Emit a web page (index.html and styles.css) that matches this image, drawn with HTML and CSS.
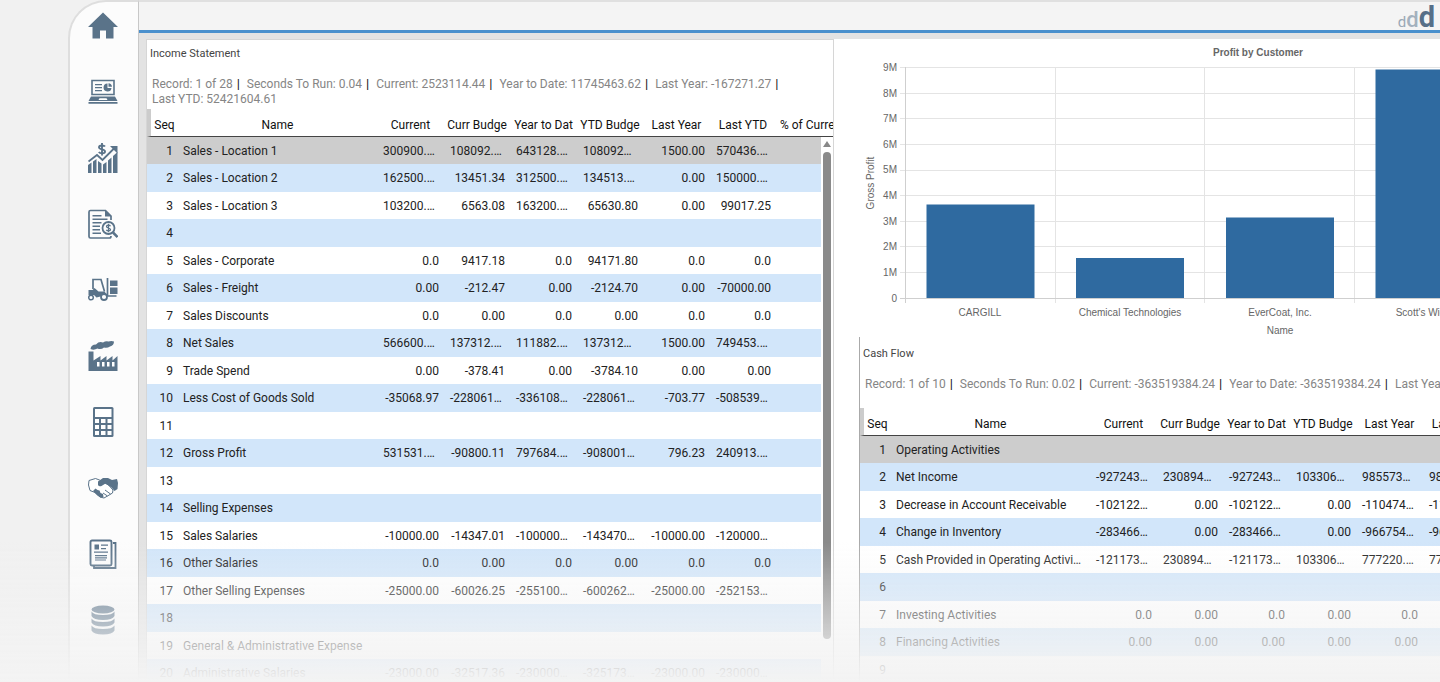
FILE: index.html
```html
<!DOCTYPE html>
<html lang="en">
<head>
    <meta charset="UTF-8">
    <meta name="viewport" content="width=device-width, initial-scale=1.0">
    <title>Financial Dashboard</title>
    <link rel="stylesheet" href="styles.css">
</head>
<body>
    <div class="app">
        <nav class="sidebar">
            <a href="#" aria-label="Home">
                <svg viewBox="0 0 30 30"><path d="M15 1.500L30 16h-4.500v11.500h-7.500v-8h-6v8H4.500V16H0z"/></svg>
            </a>
            <a href="#" aria-label="Dashboards">
                <svg viewBox="0 0 30 30"><path d="M4 3.500h22v14H4z" fill="none" stroke="#5a7389" stroke-width="1.600"/><path d="M7 7h7v1.300H7zM7 10h7v1.300H7zM7 13h7v1.300H7zM3 19.500h24l2.500 4.500H.5zM.5 25h29v1.800H.5z"/><path d="M11.500 21.200h7l1 1.800h-9z" fill="#fff"/><path d="M19.500 6.500a4 4 0 1 0 4 4.500h-4z"/><path d="M20.500 6.200a4 4 0 0 1 3.500 3.500h-3.500z"/></svg>
            </a>
            <a href="#" aria-label="Sales">
                <svg viewBox="0 0 30 30"><path d="M0 22l3.500-2.500V30H0zM5 18.500l3.500-2.500v14H5zM10 18l3.500 2.500V30H10zM15 21.500l3.500-2.500v11H15zM20 17.500l3.500-3V30H20zM25 13l4.500-4v21H25z"/><path d="M.5 18.500L9 12l5.500 5L27 4.500" fill="none" stroke="#5a7389" stroke-width="1.800"/><path d="M22 3h7.500v7.500l-2.800-2.800-2-2z"/><path d="M17 3.600C16 2 11 1.900 11 4.300c0 2.900 6 1.300 6 4.200 0 2.500-5 2.300-6.200.5M14 0v12.500" fill="none" stroke="#5a7389" stroke-width="1.900"/></svg>
            </a>
            <a href="#" aria-label="Audit">
                <svg viewBox="0 0 30 30"><path d="M23 11V7l-5.500-5.500H2.500Q1 1.500 1 3v24.500Q1 29 2.500 29h19q1.500 0 1.500-2" fill="none" stroke="#5a7389" stroke-width="1.700"/><path d="M17 1l6.500 6.500H17zM4.500 6h9v1.500h-9zM4.500 9.500h15V11h-15zM4.500 13h9v1.500h-9zM4.500 16.500h7.500V18H4.500zM4.500 20h7.500v1.500H4.500zM4.500 23.500H13V25H4.500z"/><circle cx="20.500" cy="19" r="6" fill="#fcfcfc" stroke="#5a7389" stroke-width="1.800"/><path d="M25 23.500l4.500 4.500" stroke="#5a7389" stroke-width="2.500"/><path d="M22.500 17.200c-.8-1.500-4-1.300-4 .2 0 2 4 1.200 4 3.200 0 1.700-3.300 1.700-4.200.2M20.500 14.800v8.500" fill="none" stroke="#5a7389" stroke-width="1.300"/></svg>
            </a>
            <a href="#" aria-label="Inventory">
                <svg viewBox="0 0 30 30"><path d="M5 14V4.500h8l3.500 12" fill="none" stroke="#5a7389" stroke-width="1.700"/><path d="M.5 15h4l2-2 4 3.500h6l2 2.500v2.500h-6l-4 1L6 20H.5z"/><path d="M19.500 3v18h9" fill="none" stroke="#5a7389" stroke-width="1.700"/><path d="M22 5.500h7.500v5.500H22zM22 12.500h7.500v6.500H22z"/><circle cx="3" cy="22.500" r="2.300" fill="#fff" stroke="#5a7389" stroke-width="1.500"/><circle cx="16" cy="22" r="3" fill="#fff" stroke="#5a7389" stroke-width="1.800"/></svg>
            </a>
            <a href="#" aria-label="Manufacturing">
                <svg viewBox="0 0 30 30"><path d="M.5 10.500h5v9l7-4.500v4.500l6-4.500v4.500l6-4.500v4.500l5-4.500v15H.5z"/><path d="M9 21h2.500v4.500H9zM14 21h2.500v4.500H14zM19 21h2.500v4.500H19zM24 21h2.500v4.500H24z" fill="#fff"/><path d="M2.500 8Q3 3.500 8 3.500q3-3.500 7-2 3-2 5.500-1 3-1 5.500 0Q26 4.500 22 5.500q-3 2-6 1-3 2.500-6.500 1Q6 9.500 2.500 8z"/></svg>
            </a>
            <a href="#" aria-label="Accounting">
                <svg viewBox="0 0 30 30"><rect x="5" y="0" width="20.500" height="30" rx="1.500"/><path d="M7 2h16.500v8H7zM7 12h4v4H7zM13 12h4.500v4H13zM19.500 12h4v4h-4zM7 18h4v4H7zM13 18h4.500v4H13zM19.500 18h4v4h-4zM7 24h4v4H7zM13 24h4.500v4H13zM19.500 24h4v4h-4z" fill="#fff"/></svg>
            </a>
            <a href="#" aria-label="Customers">
                <svg viewBox="0 0 30 30"><path d="M1 7.500L7.500 5.500l4 1.500 9 5 4.500 5-.5 3-5 3-3.500 2-4-1-5-4.500L2 17.500.500 12z" fill="#fff" stroke="#5a7389" stroke-width="1"/><path d="M10 8.500L15 5h5l4 2 5-1 1 4-.5 6-3 2-3-3.500-6-4-4 2.500q-2.500 1-3.500-1z"/><path d="M5 18l2.500-2.500 2 1.500 2 .5 1 2.500 2.500 1 .5 3-3 .5-3-2z"/><path d="M17 17l5.500 4M15 20l4.500 3" fill="none" stroke="#5a7389" stroke-width="1"/></svg>
            </a>
            <a href="#" aria-label="Reports">
                <svg viewBox="0 0 30 30"><path d="M25 4h2.500v25H6V27" fill="none" stroke="#5a7389" stroke-width="1.800"/><rect x="2.500" y="1.500" width="21" height="25" rx="1.500" fill="#fcfcfc" stroke="#5a7389" stroke-width="1.900"/><path d="M6.500 5.500H11v5H6.500zM13 5.500h7v1.200h-7zM13 9h5v1.200h-5zM6 12.500h14v1.200H6zM7 16h12v1.200H7zM7 18.200h12v1.200H7zM7 20.400h11v1.200H7z"/></svg>
            </a>
            <a href="#" aria-label="Database">
                <svg viewBox="0 0 30 30"><ellipse cx="15" cy="4.500" rx="11.500" ry="4"/><path d="M3.500 6.500q2 3.500 11.500 3.500t11.500-3.500v4.500q-2 4-11.500 4T3.500 11zM3.500 13.500q2 3.500 11.500 3.500t11.500-3.500V17.500q-2 4-11.500 4t-11.500-4zM3.500 20.500q2 3.500 11.500 3.500t11.500-3.500v5q-2 4-11.500 4t-11.500-4z"/></svg>
            </a>
        </nav>

        <main class="main">
            <header class="topbar">
                <div class="logo"><span class="logo-sm">d</span><span class="logo-md">d</span><span class="logo-lg">d</span></div>
            </header>

            <div class="content">
                <section class="panel income">
                    <h2>Income Statement</h2>
                    <p class="info">Record: 1 of 28 <b>|</b>&nbsp; Seconds To Run: 0.04 <b>|</b>&nbsp; Current: 2523114.44 <b>|</b>&nbsp; Year to Date: 11745463.62 <b>|</b>&nbsp; Last Year: -167271.27 <b>|</b><br>Last YTD: 52421604.61</p>
                    <div class="grid">
                        <table>
                            <colgroup><col class="c-seq"><col class="c-name"><col class="c-a"><col class="c-b"><col class="c-a"><col class="c-b"><col class="c-a"><col class="c-b"><col></colgroup>
                            <thead>
                                <tr><th>Seq</th><th>Name</th><th>Current</th><th>Curr Budge</th><th>Year to Dat</th><th>YTD Budge</th><th>Last Year</th><th>Last YTD</th><th class="pct">% of Curre</th></tr>
                            </thead>
                            <tbody>
                                <tr class="selected"><td>1</td><td>Sales - Location 1</td><td class="cut">300900.…</td><td class="cut">108092.…</td><td class="cut">643128.…</td><td class="cut">108092…</td><td>1500.00</td><td class="cut">570436.…</td><td></td></tr>
                                <tr><td>2</td><td>Sales - Location 2</td><td class="cut">162500.…</td><td>13451.34</td><td class="cut">312500.…</td><td class="cut">134513.…</td><td>0.00</td><td class="cut">150000.…</td><td></td></tr>
                                <tr><td>3</td><td>Sales - Location 3</td><td class="cut">103200.…</td><td>6563.08</td><td class="cut">163200.…</td><td>65630.80</td><td>0.00</td><td>99017.25</td><td></td></tr>
                                <tr><td>4</td><td></td><td></td><td></td><td></td><td></td><td></td><td></td><td></td></tr>
                                <tr><td>5</td><td>Sales - Corporate</td><td>0.0</td><td>9417.18</td><td>0.0</td><td>94171.80</td><td>0.0</td><td>0.0</td><td></td></tr>
                                <tr><td>6</td><td>Sales - Freight</td><td>0.00</td><td>-212.47</td><td>0.00</td><td>-2124.70</td><td>0.00</td><td>-70000.00</td><td></td></tr>
                                <tr><td>7</td><td>Sales Discounts</td><td>0.0</td><td>0.00</td><td>0.0</td><td>0.00</td><td>0.0</td><td>0.0</td><td></td></tr>
                                <tr><td>8</td><td>Net Sales</td><td class="cut">566600.…</td><td class="cut">137312.…</td><td class="cut">111882.…</td><td class="cut">137312…</td><td>1500.00</td><td class="cut">749453.…</td><td></td></tr>
                                <tr><td>9</td><td>Trade Spend</td><td>0.00</td><td>-378.41</td><td>0.00</td><td>-3784.10</td><td>0.00</td><td>0.00</td><td></td></tr>
                                <tr><td>10</td><td>Less Cost of Goods Sold</td><td>-35068.97</td><td class="cut">-228061…</td><td class="cut">-336108…</td><td class="cut">-228061…</td><td>-703.77</td><td class="cut">-508539…</td><td></td></tr>
                                <tr><td>11</td><td></td><td></td><td></td><td></td><td></td><td></td><td></td><td></td></tr>
                                <tr><td>12</td><td>Gross Profit</td><td class="cut">531531.…</td><td>-90800.11</td><td class="cut">797684.…</td><td class="cut">-908001…</td><td>796.23</td><td class="cut">240913.…</td><td></td></tr>
                                <tr><td>13</td><td></td><td></td><td></td><td></td><td></td><td></td><td></td><td></td></tr>
                                <tr><td>14</td><td>Selling Expenses</td><td></td><td></td><td></td><td></td><td></td><td></td><td></td></tr>
                                <tr><td>15</td><td>Sales Salaries</td><td>-10000.00</td><td>-14347.01</td><td class="cut">-100000…</td><td class="cut">-143470…</td><td>-10000.00</td><td class="cut">-120000…</td><td></td></tr>
                                <tr><td>16</td><td>Other Salaries</td><td>0.0</td><td>0.00</td><td>0.0</td><td>0.00</td><td>0.0</td><td>0.0</td><td></td></tr>
                                <tr><td>17</td><td>Other Selling Expenses</td><td>-25000.00</td><td>-60026.25</td><td class="cut">-255100…</td><td class="cut">-600262…</td><td>-25000.00</td><td class="cut">-252153…</td><td></td></tr>
                                <tr><td>18</td><td></td><td></td><td></td><td></td><td></td><td></td><td></td><td></td></tr>
                                <tr><td>19</td><td>General &amp; Administrative Expense</td><td></td><td></td><td></td><td></td><td></td><td></td><td></td></tr>
                                <tr><td>20</td><td>Administrative Salaries</td><td>-23000.00</td><td>-32517.36</td><td class="cut">-230000…</td><td class="cut">-325173…</td><td>-23000.00</td><td class="cut">-230000…</td><td></td></tr>
                            </tbody>
                        </table>
                        <div class="scrollbar">
                            <svg viewBox="0 0 8 6"><path d="M4 0l4 6H0z"/></svg>
                            <div class="thumb"></div>
                        </div>
                    </div>
                </section>

                <div class="right">
                    <section class="chart">
                        <svg width="830" height="298" viewBox="834 39 830 298" role="img" aria-label="Profit by Customer">
                            <g class="lines">
                                <path d="M900 67.500H1653M900 93.500H1653M900 118.500H1653M900 144.500H1653M900 170.500H1653M900 195.500H1653M900 221.500H1653M900 246.500H1653M900 272.500H1653"/>
                                <path d="M1055.500 67V303M1204.500 67V303M1354.500 67V303M1503.500 67V303"/>
                                <path class="axis" d="M905.500 67V303M900 298.500H1653"/>
                            </g>
                            <g class="bars">
                                <rect x="926.500" y="204.500" width="108" height="93.500"/>
                                <rect x="1076" y="258" width="108" height="40"/>
                                <rect x="1226" y="217.500" width="108" height="80.500"/>
                                <rect x="1375.500" y="69.500" width="108" height="228.500"/>
                            </g>
                            <g class="ticks">
                                <text x="897" y="71">9M</text><text x="897" y="97">8M</text><text x="897" y="122">7M</text><text x="897" y="148">6M</text><text x="897" y="173">5M</text>
                                <text x="897" y="199">4M</text><text x="897" y="225">3M</text><text x="897" y="250">2M</text><text x="897" y="276">1M</text><text x="897" y="302">0</text>
                            </g>
                            <g class="labels">
                                <text class="title" x="1258" y="56">Profit by Customer</text>
                                <text x="980" y="316">CARGILL</text><text x="1130" y="316">Chemical Technologies</text><text x="1280" y="316">EverCoat, Inc.</text><text x="1430" y="316">Scott's Widgets</text>
                                <text x="1280" y="334">Name</text>
                                <text transform="translate(874 183) rotate(-90)">Gross Profit</text>
                            </g>
                        </svg>
                    </section>

                    <section class="panel cash">
                        <h2>Cash Flow</h2>
                        <p class="info">Record: 1 of 10 <b>|</b>&nbsp; Seconds To Run: 0.02 <b>|</b>&nbsp; Current: -363519384.24 <b>|</b>&nbsp; Year to Date: -363519384.24 <b>|</b>&nbsp; Last Year</p>
                        <div class="grid">
                            <table>
                                <colgroup><col class="c-seq"><col class="c-name"><col class="c-a"><col class="c-b"><col class="c-a"><col class="c-b"><col class="c-a"><col class="c-b"></colgroup>
                                <thead>
                                    <tr><th>Seq</th><th>Name</th><th>Current</th><th>Curr Budge</th><th>Year to Dat</th><th>YTD Budge</th><th>Last Year</th><th>Last YTD</th></tr>
                                </thead>
                                <tbody>
                                    <tr class="selected"><td>1</td><td>Operating Activities</td><td></td><td></td><td></td><td></td><td></td><td></td></tr>
                                    <tr><td>2</td><td>Net Income</td><td class="cut">-927243…</td><td class="cut">230894…</td><td class="cut">-927243…</td><td class="cut">103306…</td><td class="cut">985573…</td><td class="cut">985573…</td></tr>
                                    <tr><td>3</td><td>Decrease in Account Receivable</td><td class="cut">-102122…</td><td>0.00</td><td class="cut">-102122…</td><td>0.00</td><td class="cut">-110474…</td><td class="cut">-110474…</td></tr>
                                    <tr><td>4</td><td>Change in Inventory</td><td class="cut">-283466…</td><td>0.00</td><td class="cut">-283466…</td><td>0.00</td><td class="cut">-966754…</td><td class="cut">-966754…</td></tr>
                                    <tr><td>5</td><td>Cash Provided in Operating Activi…</td><td class="cut">-121173…</td><td class="cut">230894…</td><td class="cut">-121173…</td><td class="cut">103306…</td><td class="cut">777220.…</td><td class="cut">777220.…</td></tr>
                                    <tr><td>6</td><td></td><td></td><td></td><td></td><td></td><td></td><td></td></tr>
                                    <tr><td>7</td><td>Investing Activities</td><td>0.0</td><td>0.00</td><td>0.0</td><td>0.00</td><td>0.0</td><td>0.0</td></tr>
                                    <tr><td>8</td><td>Financing Activities</td><td>0.00</td><td>0.00</td><td>0.00</td><td>0.00</td><td>0.00</td><td>0.00</td></tr>
                                    <tr><td>9</td><td></td><td></td><td></td><td></td><td></td><td></td><td></td></tr>
                                </tbody>
                            </table>
                        </div>
                    </section>
                </div>
            </div>
        </main>
    </div>
    <div class="fade"></div>
</body>
</html>
```
FILE: styles.css
```css
* {
    box-sizing: border-box;
}
body {
    margin: 0;
    height: 100vh;
    overflow: hidden;
    background: #f1f1f1;
    font-family: Roboto, "Liberation Sans", sans-serif;
    font-size: 12px;
    color: #222;
}
.app {
    display: flex;
    height: 100%;
    padding-left: 68px;
}

/* sidebar */
.sidebar {
    flex: none;
    display: flex;
    flex-direction: column;
    align-items: center;
    gap: 36px;
    width: 71px;
    padding: 9px 2px 0 0;
    background: #fcfcfc;
    border: 2px solid #dedede;
    border-right: 1px solid #c8c8c8;
    border-bottom: none;
    border-radius: 38px 0 0 0;
}
.sidebar a {
    flex: none;
    height: 30px;
}
.sidebar svg {
    display: block;
    width: 30px;
    height: 30px;
    fill: #5a7389;
}

/* main area */
.main {
    flex: 1;
    min-width: 0;
    display: flex;
    flex-direction: column;
    overflow: hidden;
    background: #e3e3e3;
}
.topbar {
    flex: none;
    display: flex;
    justify-content: flex-end;
    height: 33px;
    padding-right: 5px;
    background: #f4f4f4;
    border-top: 2px solid #e0e0e0;
    border-bottom: 3px solid #4a90cd;
}
.logo {
    font-weight: bold;
    line-height: 30px;
    color: #566f88;
}
.logo-sm {
    font-size: 15px;
    font-weight: normal;
    color: #9aa8b6;
}
.logo-md {
    font-size: 22px;
    font-weight: 500;
    color: #a3b1be;
}
.logo-lg {
    font-size: 29px;
}
.content {
    flex: 1;
    display: flex;
    align-items: stretch;
    min-height: 0;
    padding: 6px 0 0 7px;
}
.right {
    flex: 1;
    min-width: 0;
    overflow: hidden;
    background: #fff;
}

/* panels */
.panel {
    background: #fff;
    overflow: hidden;
}
.panel h2 {
    margin: 0;
    padding: 6px 0 0 3px;
    font-size: 11px;
    line-height: 16px;
    font-weight: normal;
    color: #444;
}
.info {
    margin: 15px 0 2px;
    padding-left: 5px;
    line-height: 15px;
    white-space: nowrap;
    color: #858585;
}
.info b {
    margin: 0 1px;
    font-size: 13px;
    font-weight: normal;
    line-height: 12px;
    color: #111;
}
.income {
    flex: 0 0 688px;
    border: 1px solid #d6d6d6;
    border-bottom: none;
}
.cash {
    margin-left: 25px;
    padding-top: 3px;
    border-left: 1px solid #aaa;
}
.cash .info {
    margin-bottom: 16px;
}

/* data grids */
.grid {
    position: relative;
}
table {
    width: 100%;
    table-layout: fixed;
    border-collapse: separate;
    border-spacing: 0;
}
.cash table {
    width: 629px;
}
.c-seq {
    width: 31px;
}
.c-name {
    width: 199px;
}
.c-a {
    width: 67px;
}
.c-b {
    width: 66px;
}
th {
    height: 28px;
    padding: 4px 0 0;
    border-bottom: 1px solid #444;
    font-weight: normal;
    white-space: nowrap;
    color: #111;
}
th:first-child {
    border-left: 4px solid #ccc;
}
th.pct {
    padding-left: 4px;
    text-align: left;
}
td {
    height: 27px;
    padding: 0 5px 0 0;
    text-align: right;
    white-space: nowrap;
}
tr:nth-child(even) td {
    height: 28px;
    background: #d2e6fa;
}
td:nth-child(2) {
    padding-left: 5px;
    text-align: left;
}
td.cut {
    padding: 0 0 0 6px;
    text-align: left;
}
tr.selected td {
    background: #cdcdcd;
}
.scrollbar {
    position: absolute;
    top: 28px;
    right: 0;
    bottom: 0;
    width: 12px;
    padding: 4px 2px;
    background: #fff;
}
.scrollbar svg {
    display: block;
    width: 8px;
    height: 6px;
    fill: #888;
}
.thumb {
    height: 487px;
    margin-top: 5px;
    border-radius: 4px;
    background: #8a8a8a;
}

/* chart */
.chart {
    height: 298px;
    overflow: hidden;
}
.chart svg {
    display: block;
}
.chart text {
    font-family: "Liberation Sans", Arial, sans-serif;
    font-size: 10px;
    fill: #666;
}
.lines path {
    fill: none;
    stroke: #e4e4e4;
}
.lines .axis {
    stroke: #cfcfcf;
}
.bars rect {
    fill: #2f6aa0;
}
.ticks text {
    text-anchor: end;
}
.labels text {
    text-anchor: middle;
}
.labels .title {
    font-weight: bold;
}

/* page fades out towards the bottom edge */
.fade {
    position: fixed;
    left: 0;
    right: 0;
    bottom: 0;
    height: 140px;
    pointer-events: none;
    background: linear-gradient(rgba(243, 243, 243, 0), rgba(243, 243, 243, 0.45) 45%, #f3f3f3 100%);
}
```
